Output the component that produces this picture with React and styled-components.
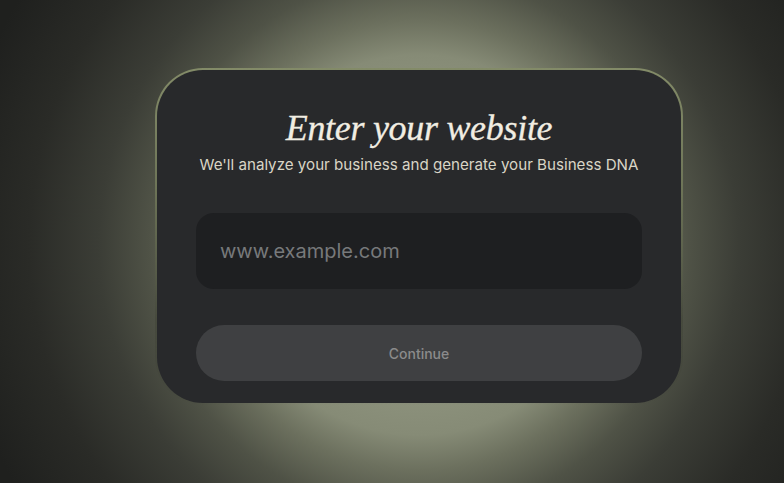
import React from "react";
import styled, { createGlobalStyle } from "styled-components";

const Global = createGlobalStyle`
  html, body { margin: 0; padding: 0; height: 100%; }
  body {
    background: #1f201e;
    font-family: Inter, "Open Sans", sans-serif;
  }
  #root { height: 100%; }
`;

const Page = styled.main`
  box-sizing: border-box;
  width: 784px;
  height: 483px;
  display: flex;
  align-items: center;
  justify-content: center;
  padding: 0 0 10px 54px;
  background: radial-gradient(
    circle at 419px 245px,
    #a3a993 0px,
    #868b76 190px,
    #6c705e 225px,
    #4f5246 270px,
    #3b3d36 320px,
    #2a2b27 390px,
    #1f201e 470px
  );
  overflow: hidden;
`;

const Card = styled.section`
  box-sizing: border-box;
  width: 528px;
  height: 337px;
  border-radius: 48px;
  border: 2px solid transparent;
  background:
    linear-gradient(#28292b, #28292b) padding-box,
    linear-gradient(180deg, #838b68 0%, #6e7558 35%, rgba(60, 64, 50, 0.4) 75%, rgba(40, 41, 43, 0) 100%) border-box;
  padding: 36px 39px 22px;
  display: flex;
  flex-direction: column;
  align-items: stretch;
`;

const Title = styled.h1`
  margin: 0;
  text-align: center;
  font-family: "Liberation Serif", "DejaVu Serif", serif;
  font-style: italic;
  font-weight: 400;
  font-size: 36px;
  line-height: 44px;
  color: #f1ede2;
  letter-spacing: -0.3px;
  -webkit-text-stroke: 0.3px #f1ede2;
`;

const Subtitle = styled.p`
  margin: 5px 0 0;
  text-align: center;
  font-size: 15.15px;
  line-height: 20px;
  color: #d9d5c6;
  letter-spacing: 0;
`;

const Field = styled.input`
  box-sizing: border-box;
  margin-top: 38px;
  width: 100%;
  height: 76px;
  border: none;
  outline: none;
  border-radius: 18px;
  background: #1e1f21;
  padding: 0 24px;
  font-family: Inter, "Open Sans", sans-serif;
  font-size: 20px;
  color: #e0e0e0;
  &::placeholder { color: #77797b; }
`;

const Button = styled.button`
  box-sizing: border-box;
  margin-top: 36px;
  width: 100%;
  height: 56px;
  border: none;
  border-radius: 28px;
  background: #3f4042;
  color: #8b8b8b;
  font-family: Inter, "Open Sans", sans-serif;
  font-size: 14px;
  font-weight: 500;
  cursor: not-allowed;
`;

export default function App() {
  return (
    <>
      <Global />
      <Page>
        <Card>
          <Title>Enter your website</Title>
          <Subtitle>We'll analyze your business and generate your Business DNA</Subtitle>
          <Field placeholder="www.example.com" />
          <Button disabled>Continue</Button>
        </Card>
      </Page>
    </>
  );
}
